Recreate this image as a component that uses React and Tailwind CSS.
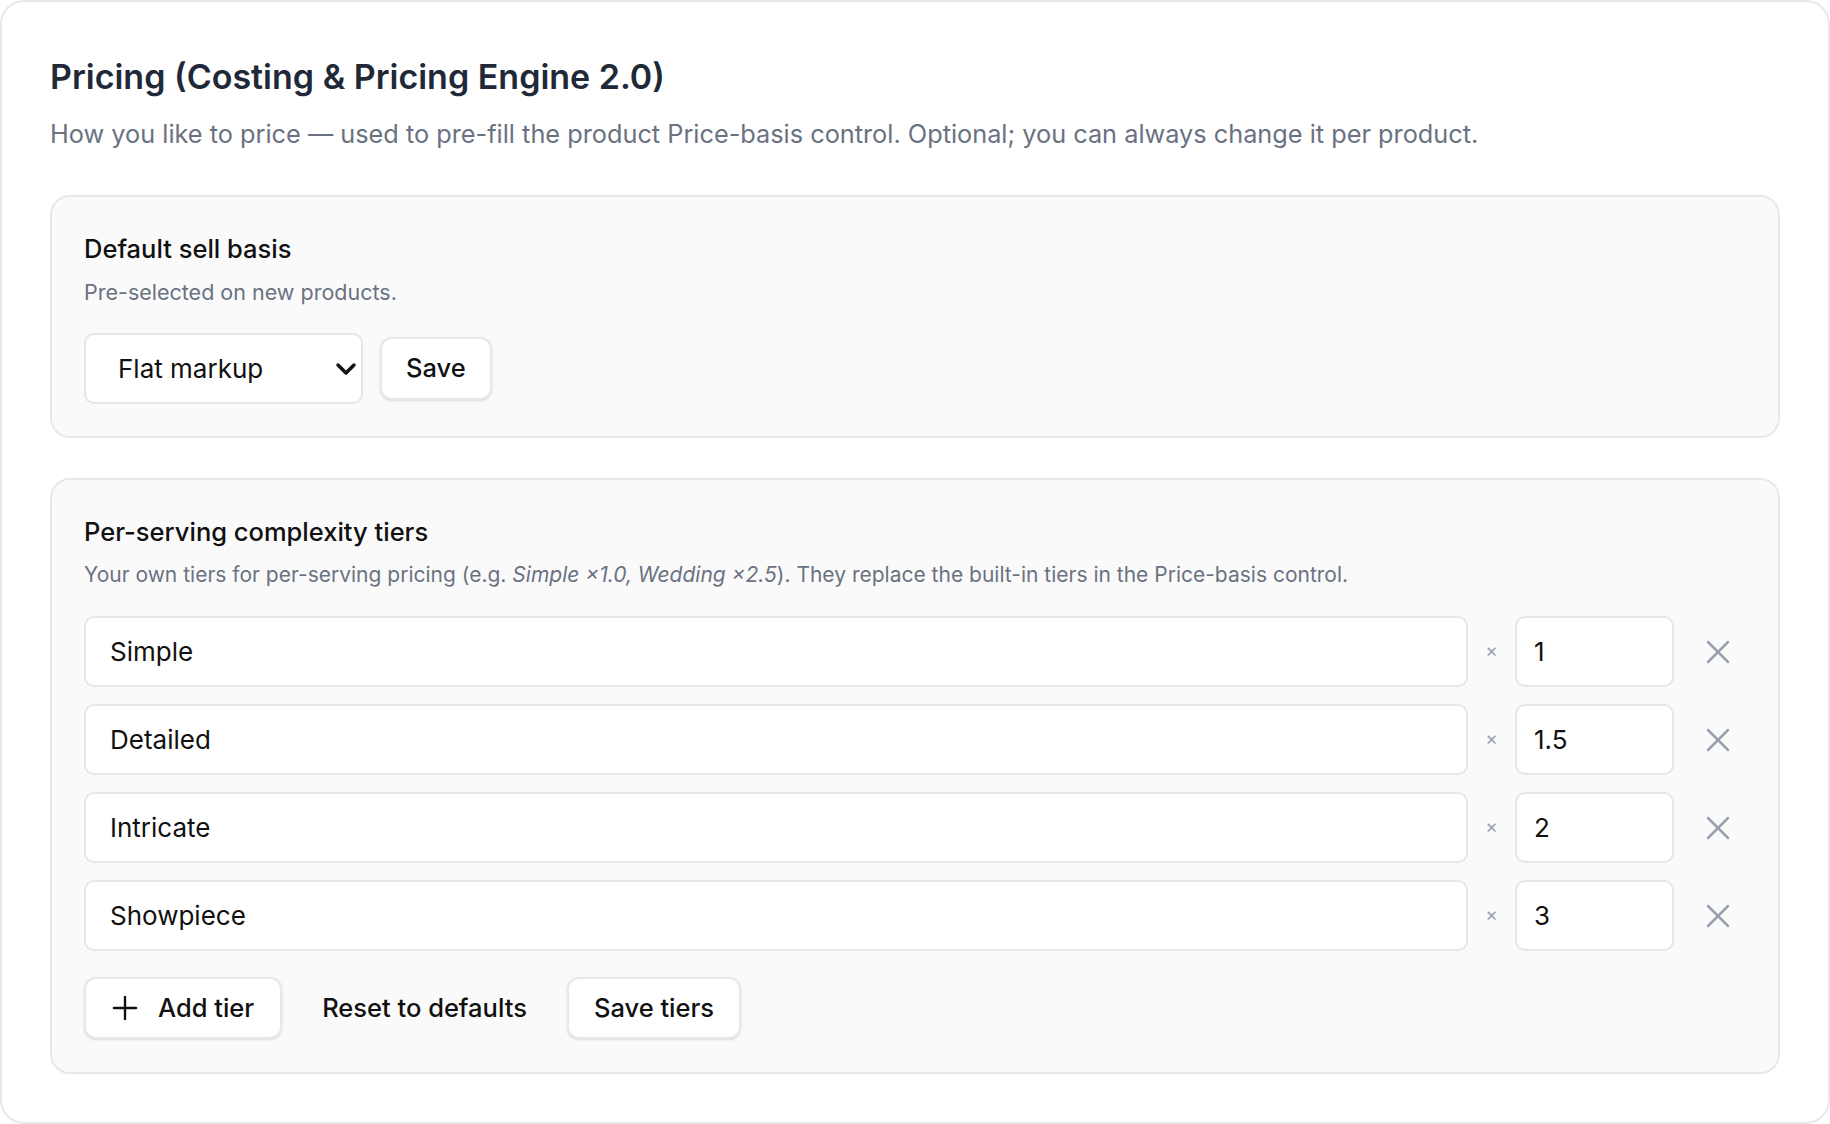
import { useState } from "react";
import { ChevronDown, Plus, X } from "lucide-react";

const defaultTiers = [
  { name: "Simple", mult: "1" },
  { name: "Detailed", mult: "1.5" },
  { name: "Intricate", mult: "2" },
  { name: "Showpiece", mult: "3" },
];

const TierRow = ({ name, mult, onName, onMult, onRemove }) => {
  return (
    <div className="flex items-center">
      <input
        value={name}
        onChange={(e) => onName(e.target.value)}
        className="h-[71px] flex-1 rounded-[10px] border-2 border-[#e6e6e6] bg-white px-[24px] text-[26px] text-[#111111] outline-none"
      />
      <span className="w-[47px] text-center text-[19px] text-gray-400">×</span>
      <input
        value={mult}
        onChange={(e) => onMult(e.target.value)}
        className="h-[71px] w-[159px] rounded-[10px] border-2 border-[#e6e6e6] bg-white px-[17px] text-[26px] text-[#111111] outline-none"
      />
      <button
        onClick={onRemove}
        className="ml-[16px] flex h-[56px] w-[56px] items-center justify-center text-gray-400"
      >
        <X size={40} strokeWidth={1.5} />
      </button>
    </div>
  );
};

function App() {
  const [basis, setBasis] = useState("flat");
  const [tiers, setTiers] = useState(defaultTiers);

  const update = (i, key, value) =>
    setTiers(tiers.map((t, idx) => (idx === i ? { ...t, [key]: value } : t)));

  return (
    <div className="min-h-[1124px] bg-white font-['Inter',sans-serif]">
      <div className="min-h-[1124px] rounded-[24px] border-2 border-[#e8e8e8] px-[48px] pt-[51px] pb-[48px]">
        <h1 className="text-[34px] font-semibold leading-[48px] text-[#1f2937]">
          Pricing (Costing &amp; Pricing Engine 2.0)
        </h1>
        <p className="mt-[15px] text-[25.3px] leading-[36px] text-gray-500">
          How you like to price — used to pre-fill the product Price-basis control. Optional; you can always change it per product.
        </p>

        <div className="mt-[43px] rounded-[20px] border-2 border-[#e8e8e8] bg-[#fafafa] px-[32px] pt-[35px] pb-[32px]">
          <h2 className="text-[25.5px] font-medium leading-[34px] text-[#111111]">Default sell basis</h2>
          <p className="mt-[11px] text-[21.5px] leading-[30px] text-gray-500">Pre-selected on new products.</p>
          <div className="mt-[26px] flex items-center gap-[17px]">
            <div className="relative w-[279px]">
              <select
                value={basis}
                onChange={(e) => setBasis(e.target.value)}
                className="h-[71px] w-full appearance-none rounded-[10px] border-2 border-[#e6e6e6] bg-white pl-[32px] text-[26px] text-[#111111] outline-none"
              >
                <option value="flat">Flat markup</option>
                <option value="serving">Per serving</option>
                <option value="hourly">Hourly</option>
              </select>
              <ChevronDown
                size={32}
                strokeWidth={2.6}
                className="pointer-events-none absolute right-[1px] top-[20px] text-[#111111]"
              />
            </div>
            <button className="h-[63px] rounded-[12px] border-2 border-[#e8e8e8] bg-white px-[24px] text-[25.5px] font-medium text-[#111111] shadow-sm">
              Save
            </button>
          </div>
        </div>

        <div className="mt-[40px] rounded-[20px] border-2 border-[#e8e8e8] bg-[#fafafa] px-[32px] pt-[35px] pb-[33px]">
          <h2 className="text-[25.5px] font-medium leading-[34px] text-[#111111]">Per-serving complexity tiers</h2>
          <p className="mt-[11px] text-[21px] leading-[30px] text-gray-500">
            Your own tiers for per-serving pricing (e.g. <em>Simple ×1.0, Wedding ×2.5</em>). They replace the built-in tiers in the Price-basis control.
          </p>
          <div className="mt-[26px] flex flex-col gap-[17px]">
            {tiers.map((t, i) => (
              <TierRow
                key={i}
                name={t.name}
                mult={t.mult}
                onName={(v) => update(i, "name", v)}
                onMult={(v) => update(i, "mult", v)}
                onRemove={() => setTiers(tiers.filter((_, idx) => idx !== i))}
              />
            ))}
          </div>
          <div className="mt-[26px] flex items-center gap-[16px]">
            <button
              onClick={() => setTiers([...tiers, { name: "", mult: "1" }])}
              className="flex h-[62px] items-center gap-[22px] rounded-[12px] border-2 border-[#e8e8e8] bg-white pl-[28px] pr-[26px] text-[25.5px] font-medium text-[#111111] shadow-sm"
            >
              <Plus size={38} strokeWidth={1.5} className="-mx-[8px]" />
              Add tier
            </button>
            <button
              onClick={() => setTiers(defaultTiers)}
              className="h-[62px] px-[24px] text-[25.5px] font-medium text-[#111111]"
            >
              Reset to defaults
            </button>
            <button className="h-[62px] rounded-[12px] border-2 border-[#e8e8e8] bg-white px-[25px] text-[25.5px] font-medium text-[#111111] shadow-sm">
              Save tiers
            </button>
          </div>
        </div>
      </div>
    </div>
  );
}

export default App;
